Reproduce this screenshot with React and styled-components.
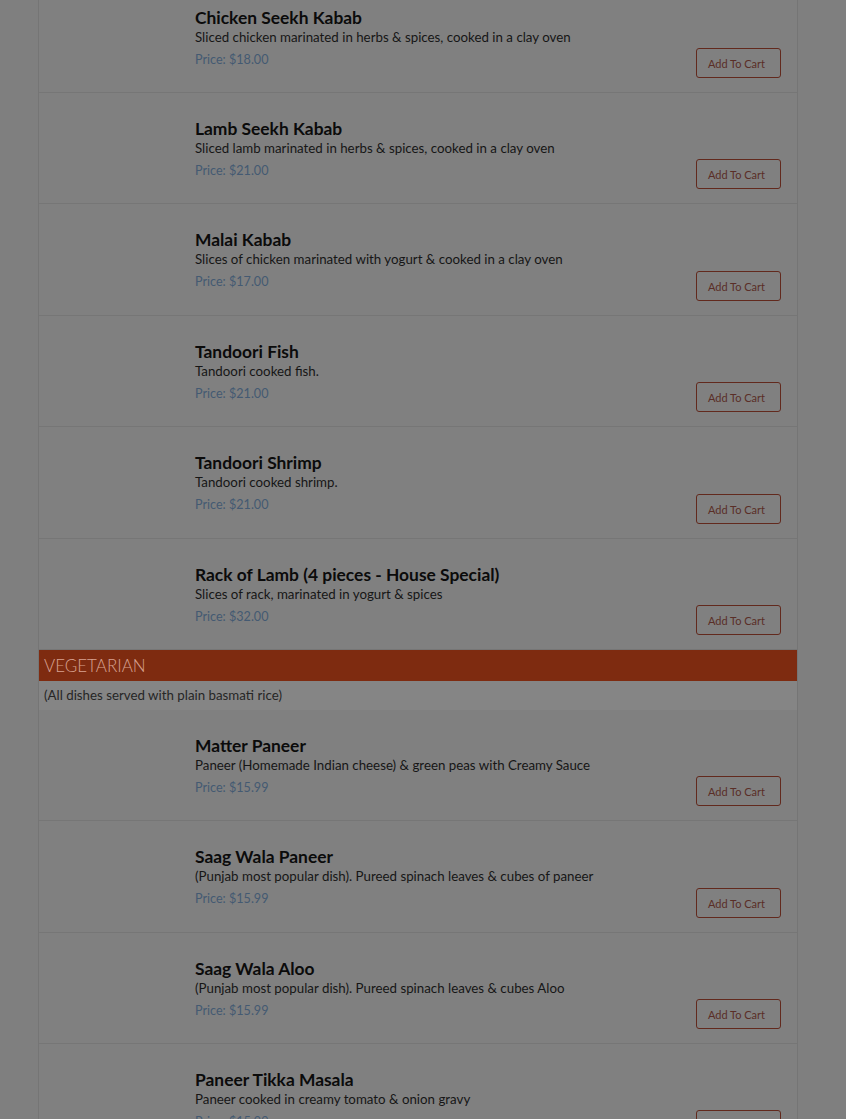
import React from "react";
import styled, { createGlobalStyle } from "styled-components";

const GlobalStyle = createGlobalStyle`
  html, body {
    margin: 0;
    padding: 0;
    background: #7f7f7f;
    font-family: Lato, "Open Sans", sans-serif;
    overflow: hidden;
  }
`;

const Page = styled.div`
  height: 1119px;
  overflow: hidden;
`;

const Menu = styled.div`
  width: 758px;
  margin: -18px 0 0 38px;
  border-left: 1px solid #757575;
  border-right: 1px solid #757575;
  background: #808080;
`;

const Item = styled.div`
  display: grid;
  grid-template-columns: 156px 1fr auto;
  height: ${(p) => p.$h - 1}px;
  box-sizing: content-box;
  border-bottom: 1px solid #767676;
`;

const Thumb = styled.div``;

const Info = styled.div`
  padding-top: 25px;
`;

const Name = styled.div`
  font-size: 17.4px;
  line-height: 21px;
  font-weight: 700;
  color: #0b0b0b;
`;

const Desc = styled.div`
  font-size: 13.3px;
  line-height: 18px;
  color: #161616;
`;

const Price = styled.div`
  font-size: 12.6px;
  line-height: 28px;
  color: #445a72;
`;

const Action = styled.div`
  display: flex;
  align-items: flex-end;
  padding: 0 16px 14px 0;
`;

const CartButton = styled.button`
  width: 85px;
  height: 30px;
  border: 1px solid #62291d;
  border-radius: 3px;
  background: transparent;
  color: #5a2e27;
  font-family: inherit;
  font-size: 11px;
  padding: 0 4px 0 0;
`;

const Band = styled.div`
  height: 31px;
  line-height: 31px;
  padding-left: 5px;
  background: #7e2b10;
  color: #d8a290;
  font-size: 17px;
  font-weight: 300;
  text-transform: uppercase;
`;

const Note = styled.div`
  height: 29px;
  line-height: 29px;
  padding-left: 5px;
  background: #858585;
  color: #262626;
  font-size: 13.3px;
`;

const tandoor = [
  ["Chicken Seekh Kabab", "Sliced chicken marinated in herbs & spices, cooked in a clay oven", "$18.00", 111],
  ["Lamb Seekh Kabab", "Sliced lamb marinated in herbs & spices, cooked in a clay oven", "$21.00", 111],
  ["Malai Kabab", "Slices of chicken marinated with yogurt & cooked in a clay oven", "$17.00", 112],
  ["Tandoori Fish", "Tandoori cooked fish.", "$21.00", 111],
  ["Tandoori Shrimp", "Tandoori cooked shrimp.", "$21.00", 112],
  ["Rack of Lamb (4 pieces - House Special)", "Slices of rack, marinated in yogurt & spices", "$32.00", 111],
];

const veg = [
  ["Matter Paneer", "Paneer (Homemade Indian cheese) & green peas with Creamy Sauce", "$15.99", 111],
  ["Saag Wala Paneer", "(Punjab most popular dish). Pureed spinach leaves & cubes of paneer", "$15.99", 112],
  ["Saag Wala Aloo", "(Punjab most popular dish). Pureed spinach leaves & cubes Aloo", "$15.99", 111],
  ["Paneer Tikka Masala", "Paneer cooked in creamy tomato & onion gravy", "$15.99", 111],
];

const Dish = ({ name, desc, price, h }) => (
  <Item $h={h}>
    <Thumb />
    <Info>
      <Name>{name}</Name>
      <Desc>{desc}</Desc>
      <Price>Price: {price}</Price>
    </Info>
    <Action>
      <CartButton>Add To Cart</CartButton>
    </Action>
  </Item>
);

export default function App() {
  return (
    <Page>
      <GlobalStyle />
      <Menu>
        {tandoor.map(([name, desc, price, h]) => (
          <Dish key={name} name={name} desc={desc} price={price} h={h} />
        ))}
        <Band>Vegetarian</Band>
        <Note>(All dishes served with plain basmati rice)</Note>
        {veg.map(([name, desc, price, h]) => (
          <Dish key={name} name={name} desc={desc} price={price} h={h} />
        ))}
      </Menu>
    </Page>
  );
}
